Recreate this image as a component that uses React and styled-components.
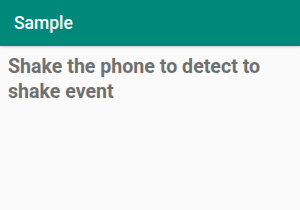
import React from 'react';
import styled, { createGlobalStyle } from 'styled-components';

const Global = createGlobalStyle`
    html, body {
        margin: 0;
        padding: 0;
        background: #fafafa;
        font-family: Roboto, "Liberation Sans", sans-serif;
    }
`;

export default function App() {
    return (
        <Screen>
            <Global/>
            <Toolbar>
                <Title>Sample</Title>
            </Toolbar>
            <Content>
                <Message>Shake the phone to detect to shake event</Message>
            </Content>
        </Screen>
    );
}

const Screen = styled.div`
    width: 300px;
    height: 210px;
    background: #fafafa;
    display: flex;
    flex-direction: column;
`;

const Toolbar = styled.div`
    height: 46px;
    background: #00897b;
    display: flex;
    align-items: center;
    padding: 0 14px;
    box-shadow: 0 1px 2px rgba(0, 0, 0, 0.2);
`;

const Title = styled.div`
    color: #ffffff;
    font-size: 17.5px;
    font-weight: 500;
    margin-top: -1px;
`;

const Content = styled.div`
    padding: 8px 8px;
`;

const Message = styled.div`
    color: #707070;
    font-size: 19.6px;
    font-weight: 700;
    line-height: 25px;
`;
